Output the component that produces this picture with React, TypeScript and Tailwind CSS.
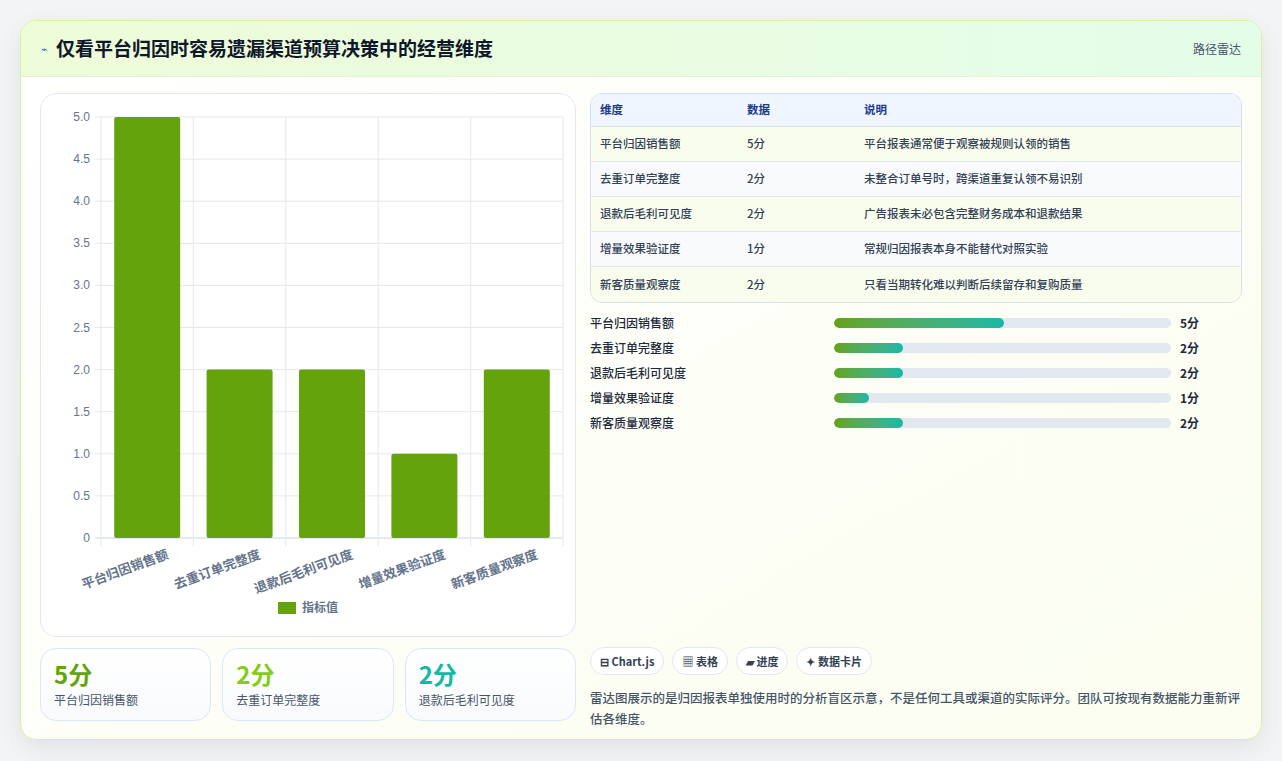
import React from "react";

const rows = [
  ["平台归因销售额", 5, "平台报表通常便于观察被规则认领的销售"],
  ["去重订单完整度", 2, "未整合订单号时，跨渠道重复认领不易识别"],
  ["退款后毛利可见度", 2, "广告报表未必包含完整财务成本和退款结果"],
  ["增量效果验证度", 1, "常规归因报表本身不能替代对照实验"],
  ["新客质量观察度", 2, "只看当期转化难以判断后续留存和复购质量"],
] as const;

function Chart() {
  const x0 = 60, x1 = 522, yTop = 23, yBot = 444;
  const h = yBot - yTop;
  const cw = (x1 - x0) / 5;
  const ticks = [0, 0.5, 1, 1.5, 2, 2.5, 3, 3.5, 4, 4.5, 5];
  return (
    <svg width="535" height="543" viewBox="0 0 535 543" style={{ fontFamily: "'Liberation Sans','Noto Sans CJK SC',sans-serif" }}>
      {ticks.map((t) => {
        const y = yBot - (t / 5) * h;
        return (
          <g key={t}>
            <line x1={x0 - 6} x2={x1} y1={y} y2={y} stroke={t === 0 ? "#cbd5e1" : "#e5e7eb"} />
            <text x={x0 - 11} y={y + 4} textAnchor="end" fontSize="12" fill="#64748b">{t === 0 ? "0" : t.toFixed(1)}</text>
          </g>
        );
      })}
      {[0, 1, 2, 3, 4, 5].map((i) => (
        <line key={i} x1={x0 + i * cw} x2={x0 + i * cw} y1={yTop} y2={yBot + 8} stroke="#e5e7eb" />
      ))}
      {rows.map((r, i) => {
        const bh = (r[1] / 5) * h;
        const cx = x0 + i * cw + cw / 2;
        return (
          <g key={i}>
            <rect x={cx - 33} y={yBot - bh} width="66" height={bh} fill="#65a30d" rx="2" />
            <text x={cx + 22} y={yBot + 20} textAnchor="end" fontSize="13" fontWeight="bold" fill="#64748b" transform={`rotate(-20 ${cx + 22} ${yBot + 20})`}>{r[0]}</text>
          </g>
        );
      })}
      <rect x="237" y="508" width="18" height="12" fill="#65a30d" />
      <text x="261" y="518" fontSize="12" fontWeight="bold" fill="#64748b">指标值</text>
    </svg>
  );
}

export default function App() {
  return (
    <div className="min-h-screen bg-[#f3f4f6] p-5 pb-5" style={{ fontFamily: "'Noto Sans CJK SC','Liberation Sans',sans-serif" }}>
      <div className="h-[720px] rounded-2xl border border-[#d9f0a3] bg-gradient-to-br from-white to-[#fbfef0] shadow-[0_8px_24px_rgba(0,0,0,0.08)] overflow-hidden flex flex-col">
        <div className="h-[56px] shrink-0 flex items-center justify-between px-5 bg-gradient-to-r from-[#eefcd8] to-[#e4fde9] border-b border-[#e5efd5]">
          <div className="flex items-center gap-2">
            <span className="text-[11px] text-[#2563eb]">⌁</span>
            <h1 className="text-[19px] font-bold text-[#0f172a]">仅看平台归因时容易遗漏渠道预算决策中的经营维度</h1>
          </div>
          <span className="text-[12px] text-[#475569]">路径雷达</span>
        </div>
        <div className="flex gap-[14px] px-[19px] pt-4">
          <div className="w-[536px] shrink-0 flex flex-col gap-[11px]">
            <div className="h-[544px] rounded-2xl border border-[#e2e8f0] bg-white overflow-hidden">
              <Chart />
            </div>
            <div className="grid grid-cols-3 gap-[11px]">
              {[["5分", "平台归因销售额", "text-[#65a30d]"], ["2分", "去重订单完整度", "text-[#84cc16]"], ["2分", "退款后毛利可见度", "text-[#14b8a6]"]].map(([v, l, c]) => (
                <div key={l} className="h-[73px] rounded-2xl border border-[#dbe7f3] bg-gradient-to-b from-white to-[#f8fafc] px-[13px] pt-[10px]">
                  <div className={`text-[24px] font-bold leading-[30px] ${c}`}>{v}</div>
                  <div className="text-[12px] text-[#475569] mt-[2px]">{l}</div>
                </div>
              ))}
            </div>
          </div>
          <div className="flex-1 flex flex-col">
            <div className="rounded-xl border border-[#d6e0ea] overflow-hidden text-[11.5px]">
              <div className="flex h-[33px] items-center bg-[#eff6ff] border-b border-[#d6e0ea] font-bold text-[#1e3a8a]">
                <div className="w-[156px] pl-[9px]">维度</div>
                <div className="w-[117px]">数据</div>
                <div>说明</div>
              </div>
              {rows.map((r, i) => (
                <div key={i} className={`flex h-[35px] items-center text-[#334155] font-medium ${i % 2 ? "bg-[#f8fafc]" : "bg-[#f9fdee]"} ${i < 4 ? "border-b border-[#e5e9ef]" : ""}`}>
                  <div className="w-[156px] pl-[9px]">{r[0]}</div>
                  <div className="w-[117px]">{r[1]}分</div>
                  <div>{r[2]}</div>
                </div>
              ))}
            </div>
            <div className="mt-[13px] flex flex-col gap-[11px]">
              {rows.map((r, i) => (
                <div key={i} className="flex items-center h-[14px] text-[12px] text-[#1e293b] font-medium">
                  <div className="w-[244px]">{r[0]}</div>
                  <div className="w-[337px] h-[10px] rounded-full bg-[#e2e8f0] overflow-hidden">
                    <div className="h-full rounded-full bg-gradient-to-r from-[#65a30d] to-[#14b8a6]" style={{ width: `${r[1] * 10 + 0.5}%` }} />
                  </div>
                  <div className="ml-[9px] font-bold">{r[1]}分</div>
                </div>
              ))}
            </div>
            <div className="mt-auto" />
            <div className="mt-[217px] flex gap-2 text-[11px] font-bold text-[#334155]">
              {["⊟ Chart.js", "▦ 表格", "▰ 进度", "✦ 数据卡片"].map((t) => (
                <span key={t} className="h-[28px] flex items-center px-[9px] rounded-full border border-[#e2e8f0] bg-white">{t}</span>
              ))}
            </div>
            <p className="mt-[12px] text-[12.5px] leading-[21px] font-medium text-[#475569]">雷达图展示的是归因报表单独使用时的分析盲区示意，不是任何工具或渠道的实际评分。团队可按现有数据能力重新评估各维度。</p>
          </div>
        </div>
      </div>
    </div>
  );
}
